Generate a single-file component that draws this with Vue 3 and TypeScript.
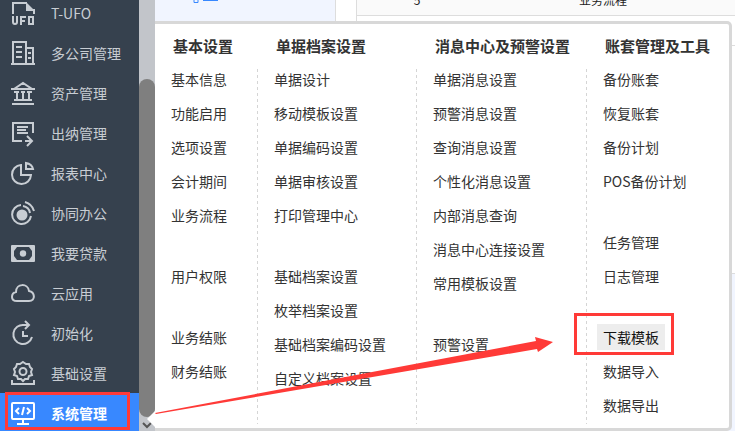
<script setup lang="ts">
interface MenuItem { label: string; active?: boolean }
interface MenuColumn { title: string; groups: MenuItem[][] }
interface NavItem { label: string; icon: string; active?: boolean }

const toItems = (text: string): MenuItem[] => text.split(' ').map((label) => ({ label }))

const nav: NavItem[] = [
  { label: 'T-UFO', icon: 'ufo' },
  { label: '多公司管理', icon: 'company' },
  { label: '资产管理', icon: 'bank' },
  { label: '出纳管理', icon: 'cashier' },
  { label: '报表中心', icon: 'pie' },
  { label: '协同办公', icon: 'collab' },
  { label: '我要贷款', icon: 'money' },
  { label: '云应用', icon: 'cloud' },
  { label: '初始化', icon: 'init' },
  { label: '基础设置', icon: 'gear' },
  { label: '系统管理', icon: 'system', active: true },
]

const columns: MenuColumn[] = [
  { title: '基本设置', groups: [toItems('基本信息 功能启用 选项设置 会计期间 业务流程'), toItems('用户权限'), toItems('业务结账 财务结账')] },
  { title: '单据档案设置', groups: [toItems('单据设计 移动模板设置 单据编码设置 单据审核设置 打印管理中心'), toItems('基础档案设置 枚举档案设置 基础档案编码设置 自定义档案设置')] },
  { title: '消息中心及预警设置', groups: [toItems('单据消息设置 预警消息设置 查询消息设置 个性化消息设置 内部消息查询 消息中心连接设置 常用模板设置'), toItems('预警设置')] },
  { title: '账套管理及工具', groups: [toItems('备份账套 恢复账套 备份计划 POS备份计划'), toItems('任务管理 日志管理'), [{ label: '下载模板', active: true }, ...toItems('数据导入 数据导出')]] },
]
</script>

<template>
  <div class="shell">
    <nav class="sidebar">
      <ul class="nav-list">
        <li v-for="item in nav" :key="item.label">
          <a href="#" class="nav-link" :class="{ active: item.active }">
            <svg class="nav-icon" viewBox="0 0 24 24" aria-hidden="true">
              <template v-if="item.icon === 'ufo'">
                <path d="M2 13V2H16M23 8V13" />
                <path class="solid" d="M15 1L24 10H15Z" />
                <path d="M2 15V21Q2 23 4 23T6 21V15M10 24V16H15M10 20H14M18 16H22V23H18Z" />
              </template>
              <template v-else-if="item.icon === 'company'">
                <path d="M0 23H24M2 22V1H15V22M15 7H22V22M5 6H11M5 11H11M5 16H11M17 12H20M17 17H20" />
              </template>
              <template v-else-if="item.icon === 'bank'">
                <path d="M3 8L12 2L21 8ZM0 8H24M1 23H23M3 19H21M6 10V18M12 10V18M18 10V18M3 11H8M10 11H14M16 11H21" />
              </template>
              <template v-else-if="item.icon === 'cashier'">
                <path d="M11 20H2V2H22V12M6 6H17M6 9H15M6 12H17M14 20H21M16 15L21 20L16 25" />
              </template>
              <template v-else-if="item.icon === 'pie'">
                <path d="M10 4A9.500 9.500 0 1 0 20 14H10ZM15 2V8H22Q21 3 15 2Z" />
              </template>
              <template v-else-if="item.icon === 'collab'">
                <circle class="solid" cx="11" cy="14" r="5.500" />
                <path d="M10 4A9.500 9.500 0 1 0 20 15M12 5Q18 6 19 12M14 1Q21 3 23 10" />
              </template>
              <template v-else-if="item.icon === 'money'">
                <path class="solid" fill-rule="evenodd" d="M1 4H23Q24 4 24 5V20Q24 21 23 21H1Q0 21 0 20V5Q0 4 1 4ZM6 6L3 10V15L6 19H18L21 15V10L18 6Z" />
                <circle class="solid" cx="12" cy="12.500" r="3.200" />
              </template>
              <template v-else-if="item.icon === 'cloud'">
                <path d="M6 20H18C25 20 24 11 18 10C17 2 5 2 5 11C0 12 -1 20 6 20Z" />
              </template>
              <template v-else-if="item.icon === 'init'">
                <path d="M18 4H13A9.500 9.500 0 1 0 21 16M14 0L18 4L14 8M12 10V15H17" />
              </template>
              <template v-else-if="item.icon === 'gear'">
                <path d="M12 1L15 3L18 3L19 6L21 8L20 11L21 14L18 15L17 18L14 18L12 20L10 18L7 18L6 15L3 14L4 11L3 8L5 6L6 3L9 3ZM1 19V23H23V19" />
                <circle cx="12" cy="10.500" r="3.500" />
              </template>
              <template v-else>
                <rect x="1" y="2" width="22" height="16" rx="1" />
                <path d="M8 7L5 10L8 13M16 7L19 10L16 13M13 6L11 14M12 18V22M6 23H18" />
              </template>
            </svg>
            <span>{{ item.label }}</span>
          </a>
        </li>
      </ul>
    </nav>
    <div class="scrollbar">
      <div class="thumb"></div>
      <svg class="scroll-arrow" viewBox="0 0 16 14" aria-hidden="true"><path d="M4 6L8 10L12 6" /></svg>
    </div>
    <main class="content">
      <div class="page">
        <div class="tree-pane">
          <svg class="tree-mark" viewBox="0 0 26 4" aria-hidden="true"><path d="M1 0V2.500H5V0" /><path class="bar" d="M10 0H25" /></svg>
        </div>
        <div class="main-pane">
          <table class="records">
            <tbody>
              <tr><td class="index">5</td><td>业务流程</td></tr>
              <tr><td></td><td></td></tr>
            </tbody>
          </table>
          <div class="footer-pane"></div>
        </div>
      </div>
      <section class="mega-menu">
        <div v-for="column in columns" :key="column.title" class="column">
          <h2>{{ column.title }}</h2>
          <div class="column-body">
            <ul v-for="(group, index) in column.groups" :key="index" class="group">
              <li v-for="item in group" :key="item.label">
                <a href="#" class="menu-link" :class="{ active: item.active }">{{ item.label }}</a>
              </li>
            </ul>
          </div>
        </div>
      </section>
      <span class="pointer"></span>
    </main>
    <div class="nav-frame"></div>
    <div class="target-frame"></div>
    <svg class="arrow" viewBox="0 0 398 78" aria-hidden="true">
      <path d="M0 76L381 4L380 0L398 5L383 15L382 12L1 77Z" />
    </svg>
  </div>
</template>

<style>
body { margin: 0; }
</style>

<style scoped>
.shell {
  position: relative;
  display: flex;
  height: 100vh;
  overflow: hidden;
  background: #fff;
  color: #333;
  font: 14px/26px "Noto Sans CJK SC", sans-serif;
}
ul { margin: 0; padding: 0; list-style: none; }
a { color: inherit; text-decoration: none; }
.sidebar { flex: 0 0 139px; overflow: hidden; background: #36414e; color: #c8cdd3; }
.nav-list { margin-top: -7px; }
.nav-link { display: flex; align-items: center; gap: 16px; height: 40px; padding-left: 11px; }
.nav-link.active { background: #3888ff; color: #fff; font-weight: 700; }
.nav-icon { width: 24px; height: 24px; overflow: visible; fill: none; stroke: currentColor; stroke-width: 2; }
.nav-icon .solid { fill: currentColor; stroke: none; }
.scrollbar { display: flex; flex: 0 0 16px; flex-direction: column; background: #c2c5ca; }
.thumb { flex: 1; margin-top: 79px; border-radius: 8px; background: #7f7f7f; }
.scroll-arrow { width: 16px; height: 14px; fill: none; stroke: #555; stroke-width: 2; }
.content { position: relative; flex: 1; min-width: 0; }
.page { display: flex; height: 100%; background: #fff; }
.tree-pane { flex: 0 0 180px; border-right: 1px solid #ddd; background: #f1f5ff; }
.tree-mark { display: block; width: 26px; height: 4px; margin-left: 38px; fill: none; stroke: #3888ff; stroke-width: 1; }
.tree-mark .bar { stroke-width: 2; }
.main-pane { display: flex; flex: 1; flex-direction: column; }
.records { margin: -15px 0 0 20px; border-collapse: collapse; color: #222; font-size: 12px; }
.records tr { height: 30px; border-bottom: 1px solid #ddd; background: #fafafa; }
.records tr + tr { background: #fff; }
.records td { padding: 0; }
.records td:first-child { border-left: 1px solid #ddd; }
.records .index { width: 120px; padding-right: 102px; box-sizing: content-box; text-align: center; }
.footer-pane { flex: 1; margin-top: 227px; border-top: 1px solid #ddd; background: #f1f5ff; }
.mega-menu {
  position: absolute;
  inset: 21px 3px 0 0;
  display: flex;
  box-sizing: border-box;
  border: 3px solid #d8d8d8;
  border-left: 0;
  border-radius: 0 5px 5px 0;
  background: #fff;
}
.column { display: flex; flex: 103 1 0; flex-direction: column; min-width: 0; white-space: nowrap; }
.column:nth-child(2) { flex-grow: 159; }
.column:nth-child(3) { flex-grow: 170; }
.column:nth-child(4) { flex-grow: 142; }
h2 { margin: 0; padding: 9px 0 7px 18px; font-size: 15px; line-height: 26px; }
.column-body {
  flex: 1;
  margin-bottom: 4px;
  padding-left: 10px;
  background: repeating-linear-gradient(#d5d5d5 0 3px, transparent 3px 6px) right 3px / 1px 100% no-repeat;
}
.column:last-child .column-body { background: none; }
.group + .group { margin-top: 27px; }
.group li { height: 34px; }
.menu-link { display: inline-block; padding: 0 6px; }
.menu-link.active { background: #ededed; color: #111; }
.pointer {
  position: absolute;
  bottom: 4px;
  left: -8px;
  border: 8px solid transparent;
  border-left: 0;
  border-right-color: #fff;
}
.nav-frame, .target-frame { position: absolute; box-sizing: border-box; border: 3px solid #ff3a37; pointer-events: none; }
.nav-frame { top: 392px; left: 5px; width: 125px; height: 38px; }
.target-frame { top: 313px; left: 574px; width: 100px; height: 42px; }
.arrow { position: absolute; top: 337px; left: 155px; width: 398px; height: 78px; fill: #ff3a37; pointer-events: none; }
</style>
